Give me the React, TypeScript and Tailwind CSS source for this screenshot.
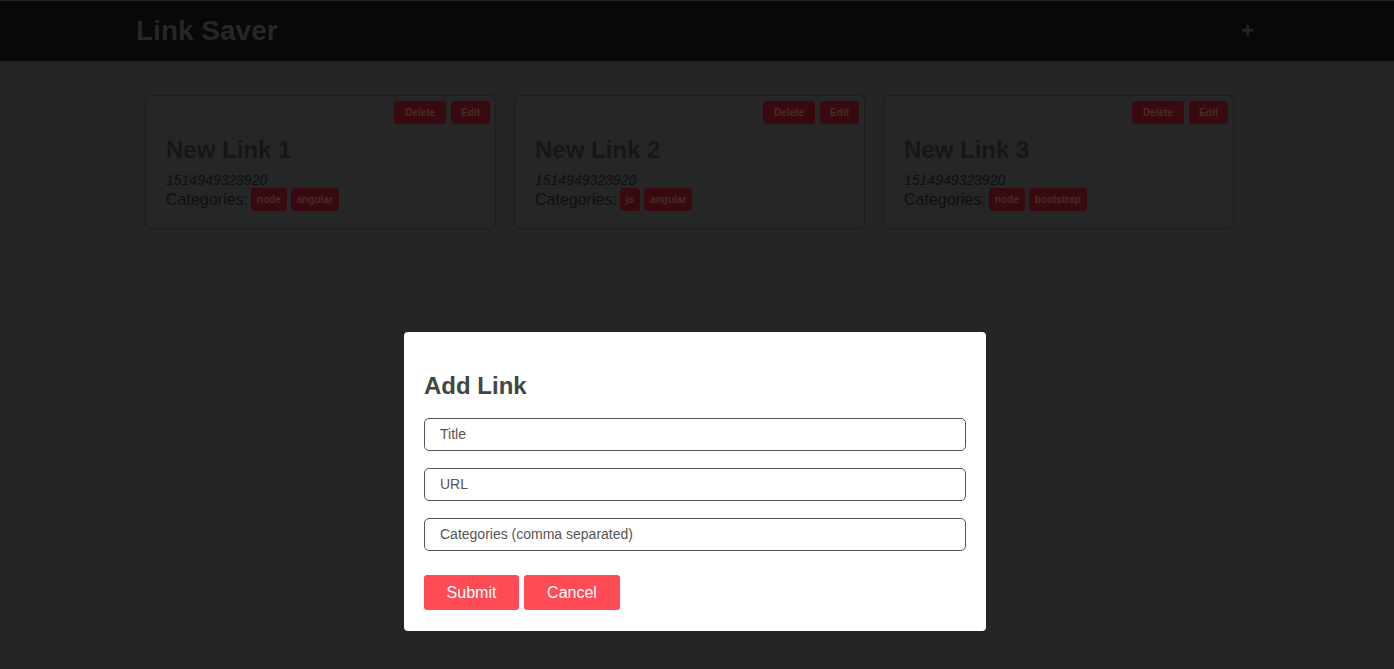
import React from "react";

const links = [
  { title: "New Link 1", cats: ["node", "angular"] },
  { title: "New Link 2", cats: ["js", "angular"] },
  { title: "New Link 3", cats: ["node", "bootstrap"] },
];

export default function App() {
  return (
    <div
      className="relative w-full h-[669px] overflow-hidden bg-[#232625]"
      style={{ fontFamily: '"Liberation Sans", Arial, sans-serif' }}
    >
      <header className="h-[61px] bg-[#080808] border-t border-[#222222] flex items-center justify-between pl-[136px] pr-[140px]">
        <h1 className="text-[28px] font-bold text-[#262626] leading-none">Link Saver</h1>
        <span className="text-[22px] font-bold text-[#262626] leading-none">+</span>
      </header>

      <div className="flex gap-[18px] pl-[145px] pt-[34px]">
        {links.map((l) => (
          <div
            key={l.title}
            className="w-[351px] h-[134px] bg-[#262626] border border-[#1c1c1c] rounded-[6px] px-[20px] pt-[5px]"
          >
            <div className="flex justify-end gap-[5px] mr-[-15px]">
              <span className="h-[23px] px-[11px] rounded-[4px] bg-[#380a0f] text-[#4a2a2d] text-[10px] font-bold flex items-center">Delete</span>
              <span className="h-[23px] px-[10px] rounded-[4px] bg-[#380a0f] text-[#4a2a2d] text-[10px] font-bold flex items-center">Edit</span>
            </div>
            <h2 className="mt-[12px] text-[24px] font-bold text-[#161616] leading-[28px]">{l.title}</h2>
            <div className="mt-[8px] text-[14px] italic text-[#0f0f0f] leading-[16px]">1514949323920</div>
            <div className="flex items-center text-[16px] text-[#0f0f0f] leading-[18px]">
              <span>Categories:</span>
              <div className="flex gap-[4px] ml-[3px]">
                {l.cats.map((c) => (
                  <span key={c} className="h-[23px] px-[6px] rounded-[4px] bg-[#380a0f] text-[#4a2a2d] text-[10px] font-bold flex items-center">{c}</span>
                ))}
              </div>
            </div>
          </div>
        ))}
      </div>

      <div className="absolute left-[404px] top-[332px] w-[582px] h-[299px] bg-white rounded-[4px] px-[20px] pt-[40px]">
        <h2 className="text-[24px] font-bold text-[#444444] leading-[28px]">Add Link</h2>
        <div className="mt-[18px] flex flex-col gap-[17px]">
          {["Title", "URL", "Categories (comma separated)"].map((p) => (
            <div key={p} className="h-[33px] border border-[#555555] rounded-[5px] flex items-center pl-[15px] text-[14px] text-[#555555]">{p}</div>
          ))}
        </div>
        <div className="mt-[24px] flex gap-[5px]">
          <button className="w-[95px] h-[35px] bg-[#ff4b55] text-white text-[16px] rounded-[3px]">Submit</button>
          <button className="w-[96px] h-[35px] bg-[#ff4b55] text-white text-[16px] rounded-[3px]">Cancel</button>
        </div>
      </div>
    </div>
  );
}
